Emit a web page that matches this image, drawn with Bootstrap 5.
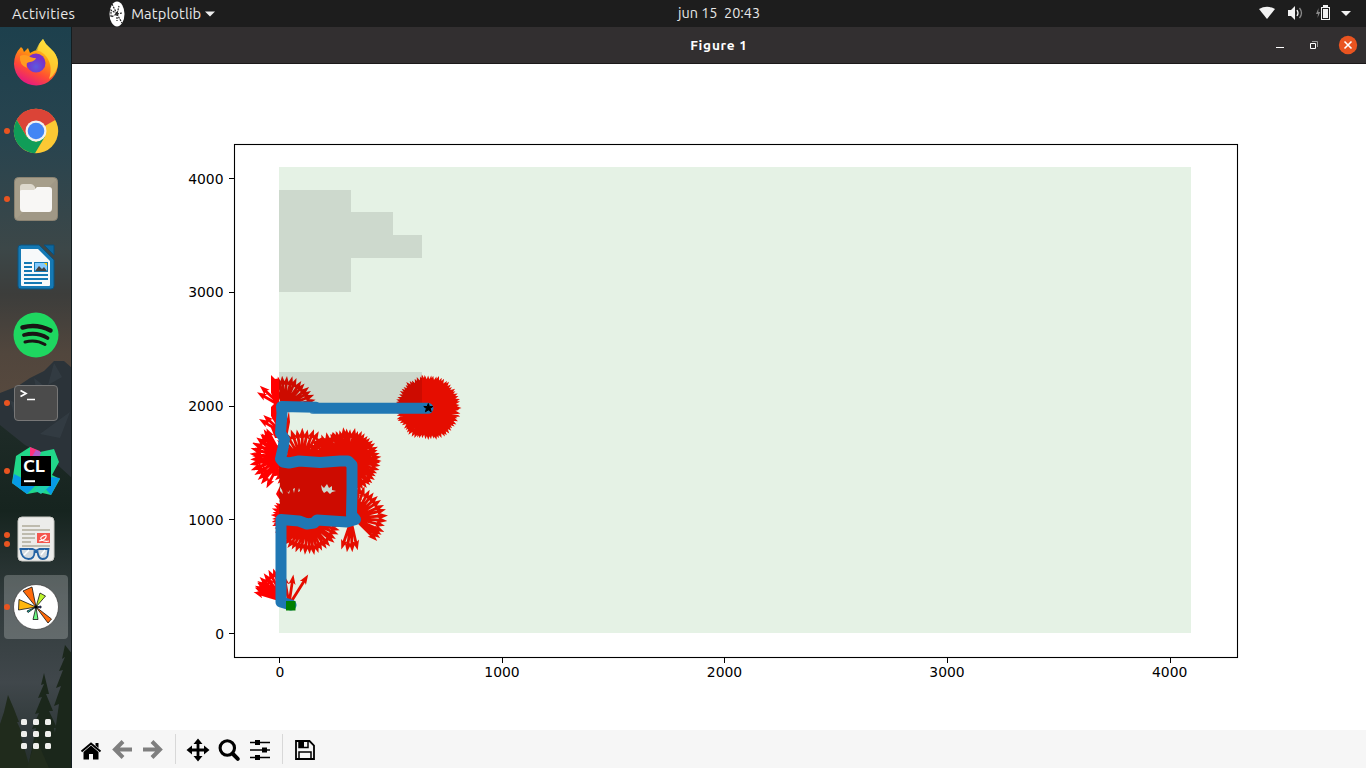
<!DOCTYPE html>
<html lang="en">
<head>
<meta charset="utf-8">
<title>Figure 1</title>
<link href="https://cdn.jsdelivr.net/npm/bootstrap@5.3.0/dist/css/bootstrap.min.css" rel="stylesheet">
<style>
body{font-family:Ubuntu,"Noto Sans",sans-serif;width:1366px;height:768px;overflow:hidden;background:#fff}
svg{display:block;flex:none}
.topbar{height:27px;background:#1d1d1d;color:#e8e8e8;font-size:14.7px;line-height:27px;display:grid;grid-template-columns:666px auto 1fr;padding:0 8px 0 12px}
.clock{white-space:pre;font-size:14.4px}
.work{height:741px}
.dock{width:72px;position:relative;padding-top:2px;background:#26363c}
.dock-bg{position:absolute;left:0;top:0}
.app{height:68px;width:72px;position:relative}
.dots{width:12px;padding-left:4px;gap:3px}
.dots i{width:6px;height:6px;border-radius:50%;background:#e95420;display:block}
.active-app::before{content:"";position:absolute;left:4px;top:2px;width:64px;height:64px;border-radius:4px;background:rgba(255,255,255,.22)}
.app>*{position:relative}
.titlebar{height:37px;background:#322f30;border-bottom:1px solid #1b191a;color:#fff;font-weight:700;font-size:13.6px;display:grid;grid-template-columns:1fr auto 1fr}
.tools{height:38px;background:#f6f6f6;padding-left:8px}
.plot text{font-family:"DejaVu Sans",sans-serif;font-size:13.9px;fill:#000}
</style>
</head>
<body>
<header class="topbar">
  <div class="d-flex align-items-center">
    <span style="letter-spacing:.3px">Activities</span>
    <svg width="16" height="26" viewBox="0 0 16 26" style="margin-left:34px"><ellipse cx="8" cy="13" rx="7.5" ry="12.5" fill="#fff"/><path d="M3 3l5 10 2-8M8 13L2 9v7l6-3 5 9M8 13l0 7M8 13l5-1" fill="none" stroke="#222" stroke-width="1.2" stroke-dasharray="2 1"/></svg>
    <span style="margin-left:6px;letter-spacing:.12px">Matplotlib</span>
    <svg width="10" height="6" viewBox="0 0 10 6" class="ms-1"><path d="M0 0.5H10L5 5.5z" fill="#eee"/></svg>
  </div>
  <div class="clock">jun 15  20:43</div>
  <div class="d-flex justify-content-end align-items-center">
    <svg width="100" height="27" viewBox="1258 0 100 27">
      <path d="M1259 9Q1267 4.500 1275 9L1267 19z" fill="#f2f2f2"/>
      <path d="M1288 10h3l4-4v14l-4-4h-3z" fill="#f2f2f2"/><path d="M1297 10q2 3 0 6" stroke="#eee" fill="none" stroke-width="1.3"/><path d="M1299.500 8q4 5 0 10" stroke="#888" fill="none" stroke-width="1.3"/>
      <path d="M1318.500 8l-2.500 6h2l-.5 4 2.800-6h-2z" fill="#888"/><path d="M1323 5h5v2h2v13h-9V7h2z" fill="#f2f2f2"/><rect x="1322.500" y="8.500" width="6" height="10" fill="#f2f2f2" stroke="#1d1d1d"/>
      <path d="M1341 11h10l-5 5z" fill="#f2f2f2"/>
    </svg>
  </div>
</header>
<main class="work d-flex">
  <nav class="dock d-flex flex-column">
    <svg class="dock-bg" width="72" height="741" viewBox="0 27 72 741">
      <defs><linearGradient id="sky" x2="0" y2="1"><stop offset="0" stop-color="#1d404d"/><stop offset=".15" stop-color="#28444f"/><stop offset=".3" stop-color="#3c4748"/><stop offset=".36" stop-color="#3c3d3b"/><stop offset=".44" stop-color="#51463d"/><stop offset=".5" stop-color="#57493e"/><stop offset=".55" stop-color="#343c43"/><stop offset="1" stop-color="#24302c"/></linearGradient>
      <linearGradient id="wood" x2="0" y2="1"><stop offset="0" stop-color="#1e2b27"/><stop offset=".25" stop-color="#16241f"/><stop offset=".5" stop-color="#303a3b"/><stop offset=".75" stop-color="#40474b"/><stop offset="1" stop-color="#252f2d"/></linearGradient></defs>
      <rect y="27" width="72" height="741" fill="url(#sky)"/>
      <path d="M0 393L18 386 30 378 44 371 54 361 64 361 72 368V520H0z" fill="#2b3339"/>
      <path d="M34 378l10 8-6 12zM54 363l8 14-14 8zM10 400l20 12-14 8zM40 434l30-22-10 26z" fill="#3a434b" opacity=".5"/>
      <path d="M0 425L25 445 50 458 72 478V768H0z" fill="url(#wood)"/>
      <g fill="#1b271b"><path d="M65 645l-3 14 3-2-6 14 4-1-7 18 5-2-7 20 5-2-9 64h23V655zM44 673l-3 12 3-1-6 14 4-1-7 17 4-1-7 16 4-1-8 40h34l-8-40 3 0-8-17 4 0-7-17 3 0z"/><path fill="#202b1c" d="M8 695l-4 17-4 12v44h30l-9-31 3 0-7-15 2 0-5-13z"/><path fill="#222d1d" d="M36 738l-9 30h22z"/></g>
      <rect x="71" y="27" width="1" height="741" fill="#131d20"/>
    </svg>

    <div class="app d-flex align-items-center"><div class="dots"></div>
      <svg width="48" height="48" viewBox="0 0 48 48"><defs><linearGradient id="ff" x1=".8" y1="0" x2=".3" y2="1"><stop offset="0" stop-color="#fff44f"/><stop offset=".4" stop-color="#ff980e"/><stop offset=".7" stop-color="#ff4b35"/><stop offset="1" stop-color="#e31587"/></linearGradient><radialGradient id="fp" cx=".5" cy=".7"><stop offset="0" stop-color="#5b5bdf"/><stop offset="1" stop-color="#7b30c8"/></radialGradient></defs>
      <path d="M9 8q2 1 3 5l4-4 2 5q5-3 8-3Q26 5 31 0q2 5 7 9 8 7 8 15a22 22 0 0 1-44 1Q2 15 9 8z" fill="url(#ff)"/><path d="M24 11Q26 5 31 0q2 5 7 9 8 7 8 15-1 10-9 16 5-15-5-25-3-3-8-4z" fill="#ffdc3a" opacity=".75"/><circle cx="24" cy="24" r="9.500" fill="url(#fp)"/><path d="M8 17q3-2 9 0 2 2 7 2-1 3-6 4-5 0-3 6-8-3-7-12z" fill="#ff9b20"/></svg></div>

    <div class="app d-flex align-items-center"><div class="dots"><i></i></div>
      <svg width="48" height="48" viewBox="0 0 48 48"><circle cx="24" cy="24" r="22.200" fill="#fcc934"/><path d="M24 24L4.800 12.900A22.200 22.200 0 0 1 43.200 13z" fill="#db4437"/><path d="M24 13H43.300A22.200 22.200 0 0 0 4.800 12.900L14.500 29.500z" fill="#db4437"/><path d="M4.800 12.900L14.500 29.500 24 35l9-5.500L23 46.200A22.200 22.200 0 0 1 4.800 12.900z" fill="#109d58"/><circle cx="24" cy="24" r="10.500" fill="#f1f1f1"/><circle cx="24" cy="24" r="8.300" fill="#4285f4"/></svg></div>

    <div class="app d-flex align-items-center"><div class="dots"><i></i></div>
      <svg width="48" height="48" viewBox="0 0 48 48"><rect x="2.500" y="2.500" width="43" height="43" rx="4" fill="#a69e8a" stroke="#8b8372"/><path d="M3 45L45 4v38l-3 3z" fill="#999180" opacity=".45"/><path d="M8 12q0-3 3-3h8q2 0 4 3v8H8z" fill="#ddd8cc"/><path d="M8 16q0-1 2-1h12l3-3h12q3 0 3 3v18q0 4-3 4H11q-3 0-3-4z" fill="#f8f7f5"/></svg></div>

    <div class="app d-flex align-items-center"><div class="dots"></div>
      <svg width="48" height="48" viewBox="0 0 48 48"><path d="M9 2H27L42 17V43q0 3-3 3H9q-3 0-3-3V5q0-3 3-3z" fill="#1579b4" stroke="#0c547f"/><path d="M9 6H26L38 18V42q0 1-1 1H10q-1 0-1-1z" fill="#f7f9fa"/><path d="M32 2h10v10z" fill="#0d679e" stroke="#0b4f78"/><path d="M12 20h8M12 24h8M12 28h8M12 32h24M12 36h24M12 40h18" stroke="#1579b4" stroke-width="2"/><rect x="22.500" y="19.500" width="13" height="9" fill="#83caff" stroke="#1579b4"/><path d="M23 28l4-5 3 3 2-2 3 4z" fill="#444"/><path d="M32 20h3v3z" fill="#fc0"/></svg></div>

    <div class="app d-flex align-items-center"><div class="dots"></div>
      <svg width="48" height="48" viewBox="0 0 48 48"><circle cx="24" cy="24" r="22.500" fill="#1ed760"/><g fill="none" stroke="#191414" stroke-linecap="round"><path d="M10.500 16.500Q25 12.500 38.500 19.500" stroke-width="4.500"/><path d="M12 24Q25 20.500 35.500 27" stroke-width="3.800"/><path d="M13 31Q24 28 33 33.500" stroke-width="3"/></g></svg></div>

    <div class="app d-flex align-items-center"><div class="dots"><i></i></div>
      <svg width="48" height="48" viewBox="0 0 48 48"><rect x="2.500" y="6.500" width="43" height="35" rx="3.500" fill="#4b4b4b" stroke="#777"/><path d="M8.500 11.500l5.500 3-5.500 3M15 20.500h8" fill="none" stroke="#fff" stroke-width="1.700"/></svg></div>

    <div class="app d-flex align-items-center"><div class="dots"><i></i></div>
      <svg width="48" height="48" viewBox="0 0 48 48"><path d="M18 0L28 5 42 2l5 13-7 13 8 4-9 16-13-3-11 2L0 36 4 9z" fill="#21d789"/><path d="M18 0l10 4-2 8h-8z" fill="#fd3280"/><path d="M24 3l5 2-2 6-8 0z" fill="#b15cc9"/><path d="M2 27l-2 9 15 11 9-9zM30 38l9 10 9-17-9-1z" fill="#079ae5"/><path d="M28 38h11l-10 9-7-4z" fill="#20cfae"/><rect x="9" y="9" width="30" height="30"/><text x="11" y="25" fill="#fff" font-size="17" font-weight="700" textLength="22" lengthAdjust="spacingAndGlyphs">CL</text><path d="M12 34.200h11" stroke="#fff" stroke-width="2"/></svg></div>

    <div class="app d-flex align-items-center"><div class="dots d-flex flex-column"><i></i><i></i></div>
      <svg width="48" height="48" viewBox="0 0 48 48"><rect x="6" y="2" width="36" height="44" rx="4" fill="#ececea" stroke="#c9c9c5"/><path d="M10 11h18M10 15h28M10 19h13M10 23h13M10 27h9M10 31h28" stroke="#aeab9b" stroke-width="1.700"/><rect x="25" y="18" width="13" height="10" fill="#f4564e"/><path d="M27 26q6-1 7-4t-3-1-1 4 7 1" fill="none" stroke="#fff" stroke-width="1.200"/><path d="M7.500 34h13l3.500 1.500 3.500-1.500h9l-1 7q-1 3-5 3-4 0-5-7h-3q0 7-6 7-7 0-8-10z" fill="#cfd7dd" fill-opacity=".8" stroke="#2462a4" stroke-width="1.800"/><path d="M12 40l5-5M29 40l4-5" stroke="#fff" stroke-width="1.500"/></svg></div>

    <div class="app active-app d-flex align-items-center"><div class="dots"><i></i></div>
      <svg width="48" height="48" viewBox="0 0 48 48"><circle cx="24" cy="24" r="22.500" fill="#fff" stroke="#444" stroke-width=".8"/><g stroke="#111" stroke-width=".8"><path d="M24 24L11 8l9-4z" fill="#ff6a0a"/><path d="M24 24L6.500 27 7 16.500z" fill="#ffb60c"/><path d="M24 24l4-14 5.500 3z" fill="#bdf52d"/><path d="M24 24l15.500 12-3.500 4z" fill="#ff6a0a"/><path d="M24 24l2 12.500h-5z" fill="#6df982"/><path d="M24 24l-8 5.500-1-1.500z" fill="#19cfc0"/><path d="M24 24l5-1v2z" fill="#2348e0"/></g><circle cx="24" cy="24" r="1.600"/></svg></div>

    <svg class="mt-auto" width="32" height="32" viewBox="0 0 32 32" style="margin:0 0 18px 20px;position:relative" fill="#efefec"><g id="gr"><rect x="1" y="1" width="6" height="6" rx="1.500"/><rect x="13" y="1" width="6" height="6" rx="1.500"/><rect x="25" y="1" width="6" height="6" rx="1.500"/></g><use href="#gr" y="12"/><use href="#gr" y="24"/></svg>
  </nav>

  <section class="d-flex flex-column flex-grow-1">
    <div class="titlebar align-items-center">
      <span></span><span style="letter-spacing:.75px">Figure 1</span>
      <svg class="ms-auto" width="100" height="36" viewBox="1266 27 100 36"><path d="M1276 47.500h8" stroke="#fff"/><path d="M1310.500 43.500h5v5h-5z" stroke="#fff" fill="none"/><path d="M1312 41.500h5.500V47" stroke="#999" fill="none"/><circle cx="1348" cy="45" r="9.200" fill="#e95420"/><path d="M1344.500 41.500l7 7m0-7l-7 7" stroke="#fff" stroke-width="1.600"/></svg>
    </div>
    <svg class="plot" width="1294" height="666" viewBox="72 64 1294 666">
      <g id="arrows" fill="#f00"></g>
      <rect x="279" y="167" width="912" height="466" fill="#008000" fill-opacity=".1" shape-rendering="crispEdges"/>
      <path d="M279 190h72v22h42v23h29v23h-71v34h-72zM279 372h143v34H279zM279 463h72v57h-72z" fill-opacity=".1" shape-rendering="crispEdges"/>
      <path d="M428 408.300H313M316 407.300L281.500 406.500 282 413 280.500 433 284.500 439 283 448 280.500 459 283 462 289 463 299 461 320 462.500 340 461 348 461 352 465V490L351.500 515 355.500 519.500 347 522 317 520 314 523 307 524 299 521 281 519.500V602L291 605" fill="none" stroke="#1f77b4" stroke-width="11" stroke-linecap="round" stroke-linejoin="round"/>
      <rect x="286" y="601" width="9.500" height="9.500" fill="#008000"/>
      <path d="M428.300 403.500l1.100 3h3.400l-2.600 2 1 3.300-2.900-1.900-2.900 1.900 1-3.300-2.600-2h3.400z" stroke="#000"/>
      <rect x="234.500" y="144.500" width="1003" height="513" fill="none" stroke="#000" stroke-width="1.100"/>
      <path d="M279.500 658v5M502.500 658v5M724.500 658v5M947.500 658v5M1170.500 658v5M234 633.500h-5M234 519.500h-5M234 406.500h-5M234 292.500h-5M234 178.500h-5" stroke="#000"/>
      <g text-anchor="middle"><text x="280" y="677">0</text><text x="502" y="677">1000</text><text x="724.500" y="677">2000</text><text x="947" y="677">3000</text><text x="1169.700" y="677">4000</text></g>
      <g text-anchor="end"><text x="224" y="638.500">0</text><text x="223.500" y="525">1000</text><text x="223.500" y="411">2000</text><text x="223.500" y="297">3000</text><text x="223.500" y="184">4000</text></g>
    </svg>
    <div class="tools">
      <svg width="260" height="38" viewBox="80 730 260 38">
        <path d="M91 745.500l7.500 6.500v7.500h-5.500V754h-4v5.500h-5.500V752z"/><path d="M81.500 751.500l9.500-8 9.500 8" fill="none" stroke="#000" stroke-width="2"/><path d="M95.500 743h3v5l-3-2.500z"/>
        <g fill="none" stroke="#7f7f7f" stroke-width="4" stroke-linejoin="miter"><path d="M132 749.500h-16M123 741.500l-8 8 8 8M143 749.500h16M152 741.500l8 8-8 8"/></g>
        <path d="M175.500 734v30M282.500 734v30" stroke="#d8d8d8"/>
        <path d="M190 750h16M198 742v16" stroke="#000" stroke-width="2.800"/><path d="M198 738.500l4.500 5.500h-9zM198 761.500l4.500-5.500h-9zM186.500 750l5.500-4.500v9zM209.500 750l-5.500-4.500v9z"/>
        <circle cx="227.300" cy="748" r="7.200" fill="none" stroke="#000" stroke-width="3.100"/><path d="M232.500 753.500l5.300 5.300" stroke="#000" stroke-width="4" stroke-linecap="round"/>
        <path d="M250 742.500h20M250 750h20M250 757.500h20" stroke="#000" stroke-width="1.600"/><path d="M255 740h5v5h-5zM262 747.500h5v5h-5zM255 755h5v5h-5z"/>
        <path d="M296 741h13.500l4.500 4.500V759h-18z" fill="none" stroke="#000" stroke-width="1.800"/><path d="M299 741h9v6.500h-9zM299 759v-7h12v7" fill="none" stroke="#000" stroke-width="1.500"/><path d="M299 741h5v6h-5z"/>
      </svg>
    </div>
  </section>
</main>
<script src="https://cdn.jsdelivr.net/npm/bootstrap@5.3.0/dist/js/bootstrap.bundle.min.js"></script>
<script>
// Each fan: origin x, y, length, first angle, last angle, step (degrees, counter-clockwise from east)
const fans = [
  [428,407.5,32.5,0,359,5],
  [284,407,31.5,12,112,9],[284,408,32,137,150,12],[284,434,29,137,150,12],
  [282,458,33,122,242,10],[281,455,30,118,235,13],
  [302,461,33,10,170,10],[298,461,30,180,359,8],[313,462,31,180,359,9],[332,463,31,60,359,10],
  [347.5,461,33,0,359,6.5],
  [308,521,33.5,0,359,8],[296,517,25,0,359,8],[325,514,29,0,180,8],[340,510,25,0,180,9],
  [354,518,33,-14,90,9.5],[351,521,31,252,285,10],[355,519,32,-44,-22,7],
  [284,600,33,100,162,9],[280,600,28,120,165,11],[291,602,32,57,57,10],[289,604,29,81,103,19]
];
let seed = 7;
const jitter = () => ((seed = seed * 16807 % 2147483647) / 2147483647 - .5);
let d = "";
for (const [x, y, r0, a0, a1, step] of fans) {
  for (let a = a0; a <= a1; a += step) {
    const t = (a + jitter() * 2) * Math.PI / 180, c = Math.cos(t), s = -Math.sin(t), r = r0 + jitter() * 2.4;
    const p = (u, v) => (x + u * c - v * s).toFixed(1) + " " + (y + u * s + v * c).toFixed(1);
    d += "M" + [p(0,-1.4), p(r-8.5,-1.4), p(r-10,-3.6), p(r,0), p(r-10,3.6), p(r-8.5,1.4), p(0,1.4)].join("L") + "z";
  }
}
// dense areas where arrows merge into a solid shape
d += "M271 375l4 4 4-1v60h-4l-4-10 5-3-5-9v-9l5-5-5-9z";
d += "M289 411l1 11-3 16-5 0z";
d += "M280 463H352V521H280V500l-4-6 4-8z";
d += "M256 592l23-7v15l-12-3z";
const path = document.createElementNS("http://www.w3.org/2000/svg", "path");
path.setAttribute("d", d);
document.getElementById("arrows").append(path);
// gaps left between the merged fans
const gaps = document.createElementNS("http://www.w3.org/2000/svg", "path");
gaps.setAttribute("fill", "#fff");
gaps.setAttribute("d", "M316 490l6 0-1-5 3 3 3-4 2 4 3-2 0 4 4 1-4 1-2 2-3-3-3 2-2-3zM280 487l2 3 1 4-3-3zM286 490l2 3 2-3-1 4zM293 489l2-1-1 5zM299 488l1 3-2 1z");
document.getElementById("arrows").append(gaps);
</script>
</body>
</html>
